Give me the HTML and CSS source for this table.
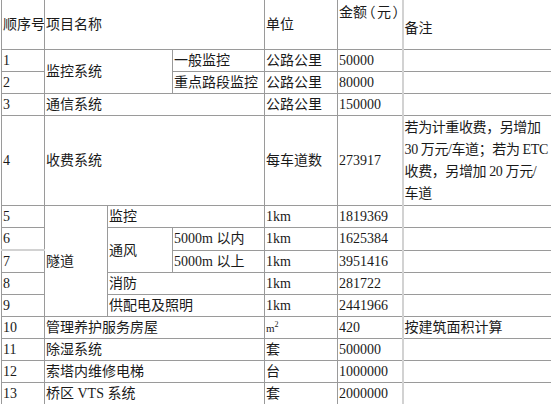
FILE: index.html
```html
<!DOCTYPE html>
<html lang="zh-CN">
<head>
<meta charset="utf-8">
<title>费用表</title>
<link rel="stylesheet" href="styles.css">
</head>
<body>
<table class="cost">
  <colgroup>
    <col class="c1"><col class="c2"><col class="c3"><col class="c4"><col class="c5"><col class="c6"><col class="c7">
  </colgroup>
  <tr class="head">
    <td>顺序号</td>
    <td colspan="3">项目名称</td>
    <td>单位</td>
    <td class="amount-h">金额<span class="paren">（</span>元<span class="paren">）</span></td>
    <td class="note note-h">备注</td>
  </tr>
  <tr>
    <td>1</td>
    <td colspan="2" rowspan="2">监控系统</td>
    <td>一般监控</td>
    <td>公路公里</td>
    <td>50000</td>
    <td class="note"></td>
  </tr>
  <tr>
    <td>2</td>
    <td>重点路段监控</td>
    <td>公路公里</td>
    <td>80000</td>
    <td class="note"></td>
  </tr>
  <tr>
    <td>3</td>
    <td colspan="3">通信系统</td>
    <td>公路公里</td>
    <td>150000</td>
    <td class="note"></td>
  </tr>
  <tr class="tall">
    <td>4</td>
    <td colspan="3">收费系统</td>
    <td>每车道数</td>
    <td>273917</td>
    <td class="note multi">若为计重收费，另增加<br>30 万元/车道；若为 ETC<br>收费，另增加 20 万元/<br>车道</td>
  </tr>
  <tr>
    <td>5</td>
    <td rowspan="5">隧道</td>
    <td colspan="2">监控</td>
    <td>1km</td>
    <td>1819369</td>
    <td class="note"></td>
  </tr>
  <tr>
    <td class="soft-bottom">6</td>
    <td rowspan="2">通风</td>
    <td>5000m 以内</td>
    <td>1km</td>
    <td>1625384</td>
    <td class="note"></td>
  </tr>
  <tr>
    <td>7</td>
    <td>5000m 以上</td>
    <td>1km</td>
    <td>3951416</td>
    <td class="note"></td>
  </tr>
  <tr>
    <td>8</td>
    <td colspan="2">消防</td>
    <td>1km</td>
    <td>281722</td>
    <td class="note"></td>
  </tr>
  <tr>
    <td>9</td>
    <td colspan="2">供配电及照明</td>
    <td>1km</td>
    <td>2441966</td>
    <td class="note"></td>
  </tr>
  <tr>
    <td>10</td>
    <td colspan="3">管理养护服务房屋</td>
    <td><span class="sq">m<sup>2</sup></span></td>
    <td>420</td>
    <td class="note">按建筑面积计算</td>
  </tr>
  <tr>
    <td>11</td>
    <td colspan="3">除湿系统</td>
    <td>套</td>
    <td>500000</td>
    <td class="note"></td>
  </tr>
  <tr>
    <td>12</td>
    <td colspan="3">索塔内维修电梯</td>
    <td>台</td>
    <td>1000000</td>
    <td class="note"></td>
  </tr>
  <tr>
    <td>13</td>
    <td colspan="3">桥区 VTS 系统</td>
    <td>套</td>
    <td>2000000</td>
    <td class="note"></td>
  </tr>
</table>
</body>
</html>
```

FILE: styles.css
```css
html, body {
  margin: 0;
  padding: 0;
  background: #ffffff;
}

body {
  padding-left: 1px;
  font-family: "Liberation Serif", "Noto Sans CJK SC", serif;
  font-size: 14px;
  color: #1a1a1a;
  overflow: hidden;
}

.cost {
  border-collapse: collapse;
  table-layout: fixed;
  width: 550px;
}

.c1 { width: 43px; }
.c2 { width: 63px; }
.c3 { width: 65px; }
.c4 { width: 92px; }
.c5 { width: 73px; }
.c6 { width: 65px; }
.c7 { width: 149px; }

.cost td {
  border: 1px solid #9a9a9a;
  padding: 0 1px;
  line-height: 19px;
  height: 21px;
  vertical-align: middle;
  text-align: left;
  white-space: nowrap;
  overflow: hidden;
}

.cost .head td {
  border-top: 0;
  height: 41px;
}

.cost .head .amount-h {
  vertical-align: top;
  padding-top: 3px;
}

.paren {
  font-feature-settings: "halt";
  margin: 0 1.5px;
}

.cost .head .note-h {
  padding-top: 8px;
}

.cost td.note {
  border-left: 2px solid #d2d2d2;
}

.cost .tall td {
  height: 85px;
}

.cost td.multi {
  line-height: 22px;
  padding-top: 1px;
  letter-spacing: -0.4px;
}

.cost td.soft-bottom {
  border-bottom: 2px solid #d2d2d2;
}

.sq {
  font-size: 11px;
}

.sq sup {
  font-size: 8px;
  line-height: 0;
}
```
